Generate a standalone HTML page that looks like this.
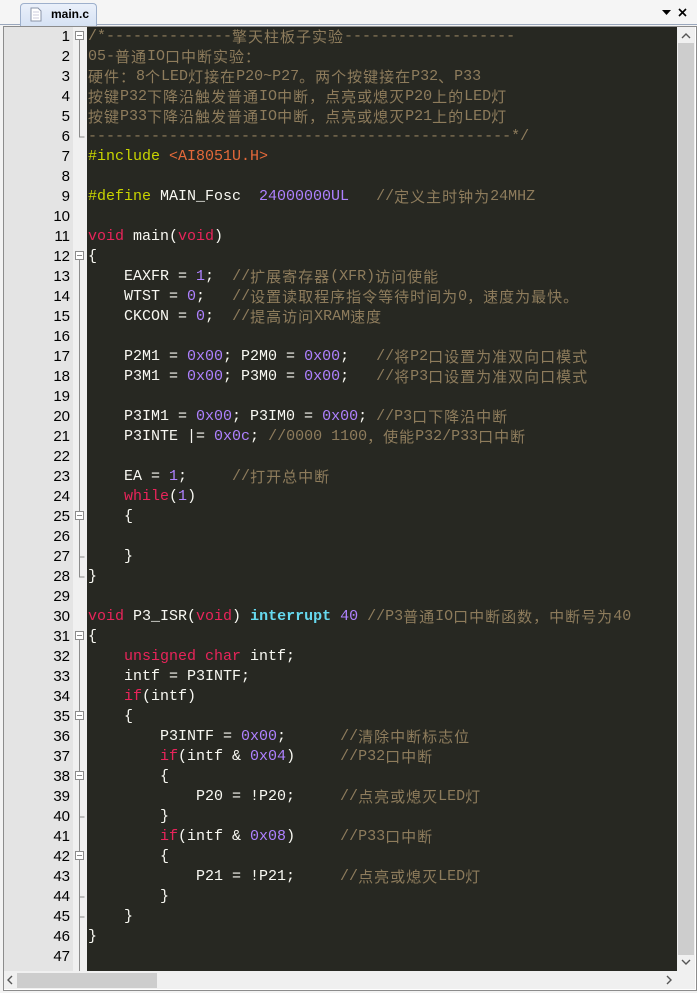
<!DOCTYPE html>
<html><head><meta charset="utf-8"><style>
body{margin:0;width:697px;height:993px;background:#f3f3f3;position:relative;overflow:hidden;font-family:"Liberation Sans",sans-serif}
#tabbar{position:absolute;left:0;top:0;width:697px;height:24px;background:#f5f5f5;border-bottom:1px solid #9aa7bc}
#tab{position:absolute;left:20px;top:3px;width:75px;height:22px;background:linear-gradient(#eaf0fa,#d6e2f4);border:1px solid #9eb0cc;border-bottom:none;border-radius:4px 4px 0 0}
#tab span{position:absolute;left:30px;top:3px;font-size:12px;font-weight:bold;color:#000}
#frame{position:absolute;left:3px;top:26px;width:692px;height:963px;background:#fff;border:1px solid #8c8c8c}
#nums{position:absolute;left:4px;top:27px;width:69px;height:944px;background:#e4e4e4}
#fold{position:absolute;left:73px;top:27px;width:14px;height:944px;background:#f0f0f0}
#code{position:absolute;left:87px;top:27px;width:590px;height:944px;background:#272822}
#src{position:absolute;left:88px;top:27px;font:15px "Liberation Mono","Noto Sans CJK SC",monospace;color:#f8f8f2}
#src div{height:20px;line-height:20px;white-space:pre;overflow:visible}
.c{letter-spacing:1px;font-family:"Noto Sans CJK SC",sans-serif;line-height:20px;vertical-align:top}
.cm{color:#8e7c5c}.pp{color:#c8d400}.st{color:#e4693a}.n{color:#ae81ff}.k{color:#e8245a}.i{color:#66d9ef;font-weight:bold}
#vs{position:absolute;left:677px;top:27px;width:18px;height:944px;background:#f0f0f0}
#vth{position:absolute;left:678px;top:43px;width:16px;height:912px;background:#cdcdcd}
#hs{position:absolute;left:4px;top:971px;width:691px;height:18px;background:#f0f0f0}
#hth{position:absolute;left:17px;top:973px;width:140px;height:15px;background:#cdcdcd}
#lnn div{height:20px;line-height:20px}
</style></head><body>
<div id="tabbar"><div id="tab"><svg style="position:absolute;left:9px;top:3px" width="12" height="15"><path d="M1 1H8L11 4V14H1Z" fill="#fff" stroke="#8a94a8"/><path d="M3 5h6M3 8h6M3 11h6" stroke="#ccd" /></svg><span>main.c</span></div>
<svg style="position:absolute;left:662px;top:8px" width="30" height="10"><path d="M0 2h9l-4.5 5z" fill="#000"/><path d="M17 1l7 7M24 1l-7 7" stroke="#000" stroke-width="1.6"/></svg></div>
<div id="frame"></div>
<div id="nums"></div><div id="fold"></div><div id="code"></div>
<div id="vs"></div><div id="vth"></div>
<svg style="position:absolute;left:677px;top:27px" width="18" height="944" fill="none" stroke="#555" stroke-width="1.4"><path d="M5 11l4-4 4 4M5 933l4 4 4-4"/></svg>
<div id="hs"></div><div id="hth"></div>
<svg style="position:absolute;left:4px;top:971px" width="691" height="18" fill="none" stroke="#555" stroke-width="1.4"><path d="M8 5l-4 4 4 4M663 5l4 4-4 4"/></svg>
<svg style="position:absolute;left:73px;top:27px" width="14" height="944" stroke="#8c8c8c" fill="none">
<path d="M6.5 13V110h5M6.5 233V550h5M6.5 530h5M6.5 613V950h5M6.5 890h5M6.5 790h5M6.5 870h5"/>
<g fill="#fff"><rect x="2.5" y="4.5" width="8" height="8"/><rect x="2.5" y="224.5" width="8" height="8"/><rect x="2.5" y="484.5" width="8" height="8"/><rect x="2.5" y="604.5" width="8" height="8"/><rect x="2.5" y="684.5" width="8" height="8"/><rect x="2.5" y="744.5" width="8" height="8"/><rect x="2.5" y="824.5" width="8" height="8"/></g>
<path d="M4 8.5h5M4 228.5h5M4 488.5h5M4 608.5h5M4 688.5h5M4 748.5h5M4 828.5h5"/>
</svg>
<div id="lnn" style="position:absolute;left:0;top:27px;width:70px;font:15px 'Liberation Sans',sans-serif;text-align:right;color:#000">
<div>1</div><div>2</div><div>3</div><div>4</div><div>5</div><div>6</div><div>7</div><div>8</div><div>9</div><div>10</div><div>11</div><div>12</div><div>13</div><div>14</div><div>15</div><div>16</div><div>17</div><div>18</div><div>19</div><div>20</div><div>21</div><div>22</div><div>23</div><div>24</div><div>25</div><div>26</div><div>27</div><div>28</div><div>29</div><div>30</div><div>31</div><div>32</div><div>33</div><div>34</div><div>35</div><div>36</div><div>37</div><div>38</div><div>39</div><div>40</div><div>41</div><div>42</div><div>43</div><div>44</div><div>45</div><div>46</div><div>47</div></div>
<div id="src">
<div class="cm">/*--------------<span class="c">擎天柱板子实验</span>-------------------</div>
<div class="cm">05-<span class="c">普通</span>IO<span class="c">口中断实验：</span></div>
<div class="cm"><span class="c">硬件：</span>8<span class="c">个</span>LED<span class="c">灯接在</span>P20~P27<span class="c">。两个按键接在</span>P32<span class="c">、</span>P33</div>
<div class="cm"><span class="c">按键</span>P32<span class="c">下降沿触发普通</span>IO<span class="c">中断，点亮或熄灭</span>P20<span class="c">上的</span>LED<span class="c">灯</span></div>
<div class="cm"><span class="c">按键</span>P33<span class="c">下降沿触发普通</span>IO<span class="c">中断，点亮或熄灭</span>P21<span class="c">上的</span>LED<span class="c">灯</span></div>
<div class="cm">-----------------------------------------------*/</div>
<div><span class="pp">#include</span> <span class="st">&lt;AI8051U.H&gt;</span></div>
<div></div>
<div><span class="pp">#define</span> MAIN_Fosc  <span class="n">24000000UL</span>   <span class="cm">//<span class="c">定义主时钟为</span>24MHZ</span></div>
<div></div>
<div><span class="k">void</span> main(<span class="k">void</span>)</div>
<div>{</div>
<div>    EAXFR = <span class="n">1</span>;  <span class="cm">//<span class="c">扩展寄存器</span>(XFR)<span class="c">访问使能</span></span></div>
<div>    WTST = <span class="n">0</span>;   <span class="cm">//<span class="c">设置读取程序指令等待时间为</span>0<span class="c">，速度为最快。</span></span></div>
<div>    CKCON = <span class="n">0</span>;  <span class="cm">//<span class="c">提高访问</span>XRAM<span class="c">速度</span></span></div>
<div></div>
<div>    P2M1 = <span class="n">0x00</span>; P2M0 = <span class="n">0x00</span>;   <span class="cm">//<span class="c">将</span>P2<span class="c">口设置为准双向口模式</span></span></div>
<div>    P3M1 = <span class="n">0x00</span>; P3M0 = <span class="n">0x00</span>;   <span class="cm">//<span class="c">将</span>P3<span class="c">口设置为准双向口模式</span></span></div>
<div></div>
<div>    P3IM1 = <span class="n">0x00</span>; P3IM0 = <span class="n">0x00</span>; <span class="cm">//P3<span class="c">口下降沿中断</span></span></div>
<div>    P3INTE |= <span class="n">0x0c</span>; <span class="cm">//0000 1100<span class="c">，使能</span>P32/P33<span class="c">口中断</span></span></div>
<div></div>
<div>    EA = <span class="n">1</span>;     <span class="cm">//<span class="c">打开总中断</span></span></div>
<div>    <span class="k">while</span>(<span class="n">1</span>)</div>
<div>    {</div>
<div></div>
<div>    }</div>
<div>}</div>
<div></div>
<div><span class="k">void</span> P3_ISR(<span class="k">void</span>) <span class="i">interrupt</span> <span class="n">40</span> <span class="cm">//P3<span class="c">普通</span>IO<span class="c">口中断函数，中断号为</span>40</span></div>
<div>{</div>
<div>    <span class="k">unsigned char</span> intf;</div>
<div>    intf = P3INTF;</div>
<div>    <span class="k">if</span>(intf)</div>
<div>    {</div>
<div>        P3INTF = <span class="n">0x00</span>;      <span class="cm">//<span class="c">清除中断标志位</span></span></div>
<div>        <span class="k">if</span>(intf &amp; <span class="n">0x04</span>)     <span class="cm">//P32<span class="c">口中断</span></span></div>
<div>        {</div>
<div>            P20 = !P20;     <span class="cm">//<span class="c">点亮或熄灭</span>LED<span class="c">灯</span></span></div>
<div>        }</div>
<div>        <span class="k">if</span>(intf &amp; <span class="n">0x08</span>)     <span class="cm">//P33<span class="c">口中断</span></span></div>
<div>        {</div>
<div>            P21 = !P21;     <span class="cm">//<span class="c">点亮或熄灭</span>LED<span class="c">灯</span></span></div>
<div>        }</div>
<div>    }</div>
<div>}</div>
<div></div>
</div>
</body></html>
